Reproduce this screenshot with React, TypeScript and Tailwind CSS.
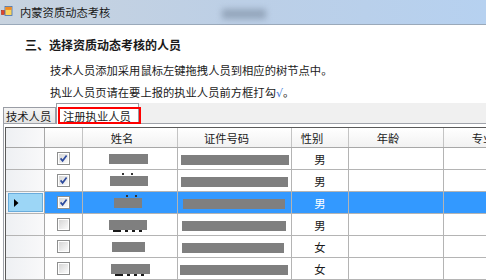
import React from "react";

type Row = {
  checked: boolean;
  name: [number, number];
  id: [number, number];
  gender: string;
  selected?: boolean;
  bits?: "above" | "below";
};

const rows: Row[] = [
  { checked: true, name: [26, 39], id: [3, 108], gender: "男" },
  { checked: true, name: [27, 38], id: [3, 107], gender: "男", bits: "above" },
  { checked: true, name: [31, 28], id: [5, 102], gender: "男", selected: true, bits: "above" },
  { checked: false, name: [26, 38], id: [4, 104], gender: "男", bits: "below" },
  { checked: false, name: [29, 33], id: [4, 102], gender: "女" },
  { checked: false, name: [28, 39], id: [2, 108], gender: "女", bits: "below" },
];

function FormIcon() {
  return (
    <svg width="12" height="12" viewBox="0 0 12 12" className="shrink-0">
      <rect x="0.5" y="4.5" width="3" height="4" fill="#e0462a" stroke="#b02a12" strokeWidth="0.6" />
      <rect x="4" y="0.5" width="7" height="9" fill="#fbd35a" stroke="#3c6fb8" strokeWidth="0.8" />
      <rect x="4.4" y="0.9" width="6.2" height="3" fill="#f08a24" />
    </svg>
  );
}

function Check({ on }: { on: boolean }) {
  return (
    <div className="flex h-[13px] w-[13px] items-center justify-center border border-[#8e8f8f] bg-white p-px">
      <div className="relative h-full w-full bg-gradient-to-br from-[#d6d6d6] to-[#fbfbfb]">
        {on && (
          <svg width="9" height="9" viewBox="0 0 9 9" className="absolute left-0 top-0">
            <path d="M1.6 4.4 L3.6 6.8 L7.6 1.6" fill="none" stroke="#2c4a9e" strokeWidth="1.7" />
          </svg>
        )}
      </div>
    </div>
  );
}

function Bits() {
  return (
    <div className="flex gap-[4px]">
      <div className="h-[2px] w-[8px] bg-[#1a1a1a]" />
      <div className="h-[2px] w-[3px] bg-[#1a1a1a]" />
      <div className="h-[2px] w-[3px] bg-[#1a1a1a]" />
      <div className="h-[2px] w-[3px] bg-[#1a1a1a]" />
    </div>
  );
}

export default function App() {
  return (
    <div className="relative h-[280px] w-[486px] overflow-hidden bg-white font-['Noto_Sans_CJK_SC',sans-serif] text-[11.3px] text-[#1a1a1a]">
      {/* title bar */}
      <div className="relative flex h-[25px] items-center gap-[7px] border-b border-[#9aa9ba] bg-gradient-to-r from-[#c8d3df] via-[#bccfe6] to-[#b6d1f0] pl-[1px]">
        <FormIcon />
        <span className="leading-[16px]">内蒙资质动态考核</span>
        <div className="absolute left-[222px] top-[9px] h-[10px] w-[44px] bg-[#7a8ba0] opacity-60 blur-[3px]" />
      </div>

      {/* instructions */}
      <div className="pt-[12px]">
        <p className="h-[16px] pl-[25px] text-[12px] font-bold leading-[16px]">三、选择资质动态考核的人员</p>
        <p className="mt-[9px] h-[16px] pl-[50px] leading-[16px]">技术人员添加采用鼠标左键拖拽人员到相应的树节点中。</p>
        <p className="mt-[6px] h-[16px] pl-[50px] leading-[16px]">
          执业人员页请在要上报的执业人员前方框打勾
          <span className="font-['DejaVu_Sans',sans-serif] text-[11px] text-[#3b78d8]">√</span>。
        </p>
      </div>

      {/* tabs */}
      <div className="flex h-[23px] items-end">
        <div className="w-[3px] shrink-0" />
        <div className="h-[16px] w-[53px] shrink-0 border border-b-0 border-[#9a9da5] bg-gradient-to-b from-[#f4f4f4] to-[#e4e4e4] pl-[2px] pt-[1px] leading-[14px]">
          技术人员
        </div>
        <div className="relative z-10 -mb-px h-[21px] w-[83px] shrink-0 border border-b-0 border-[#9a9da5] bg-white pl-[6px] pt-[4px] leading-[16px]">
          注册执业人员
        </div>
        <div className="h-[20px] flex-1 bg-[#f0f0f0]" />
      </div>
      <div className="pointer-events-none absolute left-[58px] top-[107px] z-20 h-[17px] w-[83px] border-2 border-[#ff0000]" />

      {/* tab page */}
      <div className="ml-[3px] border-l border-t border-[#a0a3aa] pl-px pt-[3px]">
        <div className="border-l border-t border-[#5a5a5a]">
          {/* header */}
          <div className="flex h-[20px] border-b border-[#a8a8a8] bg-gradient-to-b from-white to-[#f2f2f2]">
            <div className="h-full w-[39px] shrink-0 border-r border-[#a8a8a8] bg-gradient-to-r from-[#eef0f3] to-[#f9f9fa]" />
            <div className="h-full w-[38px] shrink-0 border-r border-[#c4c4c4]" />
            {[
              ["姓名", "w-[95px]"],
              ["证件号码", "w-[114px]"],
              ["性别", "w-[57px]"],
              ["年龄", "w-[95px]"],
              ["专业", "w-[95px]"],
            ].map(([t, w]) => (
              <div
                key={t}
                className={`${w} flex h-full shrink-0 items-center justify-center border-r border-[#c4c4c4] pr-[16px] leading-[16px]`}
              >
                {t}
              </div>
            ))}
          </div>

          {/* rows */}
          {rows.map((r, i) => {
            const cell = r.selected ? "bg-[#3399ff]" : "bg-white";
            return (
              <div key={i} className="flex h-[22px] border-b border-[#b4b4b4]">
                <div className="flex h-full w-[39px] shrink-0 items-stretch border-r border-[#a8a8a8] bg-gradient-to-r from-[#eef0f3] to-[#f9f9fa]">
                  {r.selected && (
                    <div className="my-px ml-[2px] mr-px flex flex-1 items-center border border-[#69acdc] bg-[#9cd6f6] pl-[5px]">
                      <svg width="5" height="8" viewBox="0 0 5 8">
                        <path d="M0 0 L4.5 4 L0 8 Z" fill="#000" />
                      </svg>
                    </div>
                  )}
                </div>
                <div className={`flex h-full w-[38px] shrink-0 items-center justify-center border-r border-[#b4b4b4] ${cell}`}>
                  <Check on={r.checked} />
                </div>
                <div className={`flex h-full w-[95px] shrink-0 flex-col justify-center border-r border-[#b4b4b4] ${cell}`}>
                  <div className="flex h-[3px] items-end" style={{ paddingLeft: r.name[0] + 12 }}>
                    {r.bits === "above" && (
                      <div className="flex gap-[7px]">
                        <div className="h-[2px] w-[2px] bg-[#333]" />
                        <div className="h-[2px] w-[2px] bg-[#333]" />
                      </div>
                    )}
                  </div>
                  <div className="mt-[1px] h-[10px] bg-[#7f7f7f]" style={{ marginLeft: r.name[0], width: r.name[1] }} />
                  <div className="h-[3px]" style={{ paddingLeft: r.name[0] + 4 }}>
                    {r.bits === "below" && <Bits />}
                  </div>
                </div>
                <div className={`flex h-full w-[114px] shrink-0 items-center border-r border-[#b4b4b4] pt-[2px] ${cell}`}>
                  <div className="h-[10px] bg-[#7f7f7f]" style={{ marginLeft: r.id[0], width: r.id[1] }} />
                </div>
                <div
                  className={`flex h-full w-[57px] shrink-0 items-center justify-center border-r border-[#b4b4b4] leading-[16px] ${cell} ${
                    r.selected ? "text-white" : ""
                  }`}
                >
                  {r.gender}
                </div>
                <div className={`h-full w-[95px] shrink-0 border-r border-[#b4b4b4] ${cell}`} />
                <div className={`h-full w-[95px] shrink-0 border-r border-[#b4b4b4] ${cell}`} />
              </div>
            );
          })}
        </div>
      </div>
    </div>
  );
}
